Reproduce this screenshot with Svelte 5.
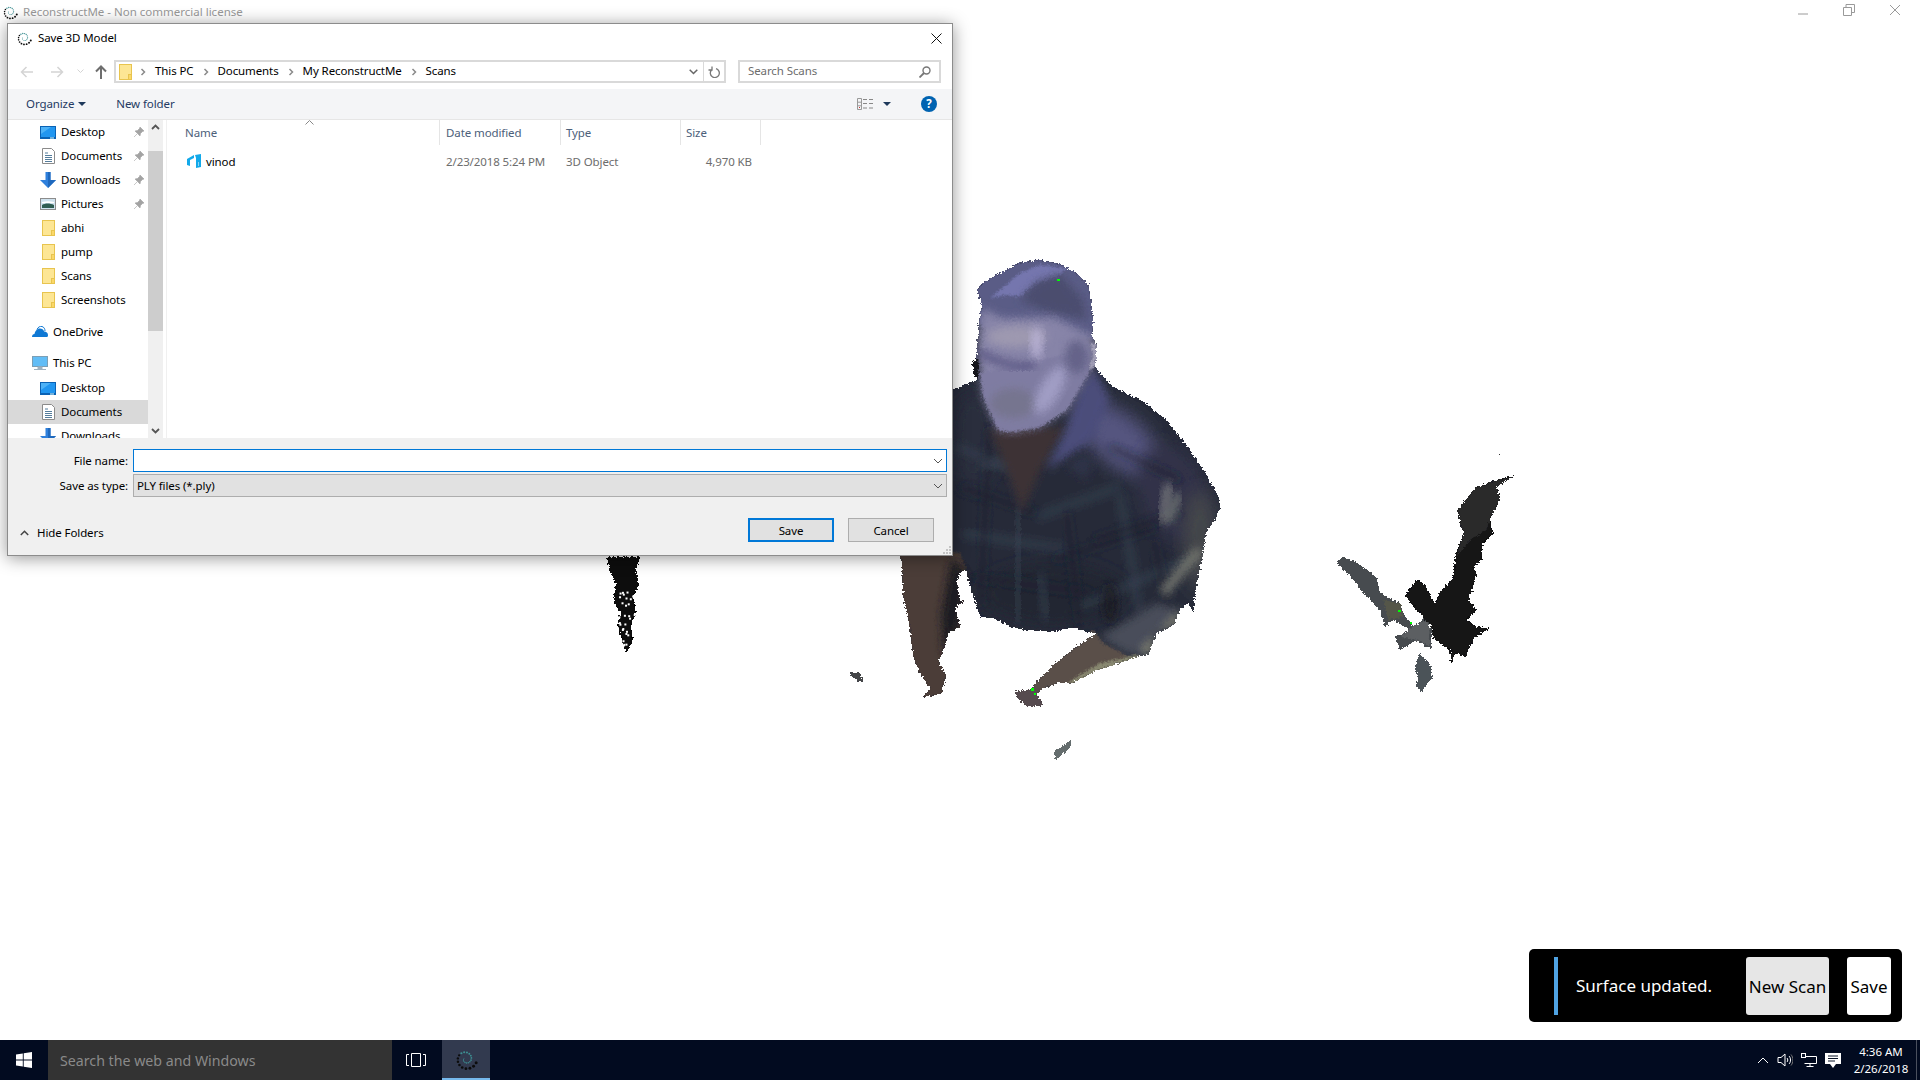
<script>
const quick = [
  { label: 'Desktop', icon: 'desktop', pin: true },
  { label: 'Documents', icon: 'docs', pin: true },
  { label: 'Downloads', icon: 'down', pin: true },
  { label: 'Pictures', icon: 'pics', pin: true },
  { label: 'abhi', icon: 'folder' },
  { label: 'pump', icon: 'folder' },
  { label: 'Scans', icon: 'folder' },
  { label: 'Screenshots', icon: 'folder' }
];

const pcItems = [
  { label: 'Desktop', icon: 'desktop', cls: 'first' },
  { label: 'Documents', icon: 'docs', cls: 'selected' },
  { label: 'Downloads', icon: 'down', cls: '' }
];

const crumbs = ['This PC', 'Documents', 'My ReconstructMe', 'Scans'];

// dotted spiral of the ReconstructMe logo, inner curl first
const logoDots = Array.from({ length: 24 }, (_, i) => {
  const t = i / 23;
  const a = ((200 - t * 540) * Math.PI) / 180;
  const r = 1.4 + t * 5.8;
  return {
    x: 8 + r * Math.cos(a),
    y: 8 + r * Math.sin(a),
    r: 0.32 + t * 0.68,
    c: t < 0.62 ? '#3d8f92' : '#0c0c0c'
  };
});

// man, in coordinates of a 3x crop whose origin is (880, 240)
const man = `292,150 300,135 340,110 420,68 480,60 540,72 590,100 625,135 632,180 640,240 636,290 650,310 648,360 640,375
660,400 700,440 790,485 860,540 930,630 970,690 1015,770 1022,800 1005,840 980,870 970,930 950,1030 940,1120 925,1085 900,1110
880,1155 830,1180 805,1245 770,1250 715,1270 650,1290 575,1330 530,1330 490,1345 470,1360 490,1395 440,1400 410,1370 405,1355
450,1350 490,1305 520,1275 590,1220 650,1180 620,1175 580,1160 520,1175 440,1170 390,1160 340,1135 300,1130 290,1100 265,1020
258,985 240,1000 230,1025 240,1080 250,1085 225,1100 240,1160 205,1180 190,1230 175,1265 198,1305 185,1360 150,1368 130,1370
150,1345 120,1300 100,1250 90,1160 70,1070 65,960 40,900 100,500 218,450 292,420 290,330 296,250 306,200`;

const plaid = [
  [230, 620, 420, 700], [240, 740, 470, 820], [250, 880, 560, 930], [280, 1010, 640, 1060],
  [470, 830, 720, 740], [520, 960, 830, 860], [600, 1100, 920, 960], [330, 560, 300, 1100],
  [420, 800, 410, 1150], [560, 820, 600, 1150], [720, 760, 780, 1120], [690, 620, 900, 720],
  [300, 680, 520, 640], [640, 900, 900, 820], [480, 1000, 500, 1140], [820, 900, 860, 1080]
];

// speckled chunk by the left edge of the scan, holes get denser downwards
const speck = Array.from({ length: 60 }, (_, i) => {
  const a = Math.sin(i * 12.9898) * 43758.5453;
  const b = Math.sin(i * 78.233) * 24634.6345;
  const v = b - Math.floor(b);
  return { x: 611 + (a - Math.floor(a)) * 26, y: 580 + Math.sqrt(v) * 75 };
});
</script>

{#snippet logo(size)}
  <svg width={size} height={size} viewBox="0 0 16 16" class="noshrink">
    {#each logoDots as d}
      <circle cx={d.x} cy={d.y} r={d.r} fill={d.c} />
    {/each}
  </svg>
{/snippet}

{#snippet folder()}
  <svg width="13" height="16" viewBox="0 0 13 16" class="noshrink">
    <rect x=".5" y=".5" width="12" height="15" fill="#fde694" stroke="#e8c44e" />
    <rect x="9.5" y="10.5" width="3" height="5" fill="#fbd868" stroke="#e8c44e" />
  </svg>
{/snippet}

{#snippet navIcon(kind)}
  <span class="nav-ico">
    {#if kind === 'folder'}
      <span class="folder-ico">{@render folder()}</span>
    {:else if kind === 'desktop'}
      <svg width="16" height="13" viewBox="0 0 16 13">
        <rect width="16" height="13" fill="#0a62b4" />
        <rect x="1" y="1" width="14" height="10" fill="#2196f0" />
        <path d="M1 1h10L1 8z" fill="#4db2f7" />
        <rect x="10" y="11.5" width="4" height="1" fill="#dff" />
      </svg>
    {:else if kind === 'docs'}
      <svg width="13" height="16" viewBox="0 0 13 16">
        <path d="M.5.5h9l3 3v12H.5z" fill="#fff" stroke="#8b8b8b" />
        <path d="M3 5h3M3 7.500h7M3 9.500h7M3 11.500h7M3 13.500h7" stroke="#557d9c" />
      </svg>
    {:else if kind === 'down'}
      <svg width="16" height="16" viewBox="0 0 16 16">
        <path d="M5.500 0h5v8H16l-8 8-8-8h5.500z" fill="#2f80dc" />
        <path d="M8 0h2.500v8H16l-8 8z" fill="#1f69bd" />
      </svg>
    {:else if kind === 'pics'}
      <svg width="16" height="12" viewBox="0 0 16 12">
        <rect x=".5" y=".5" width="15" height="11" fill="#cfe2ee" stroke="#8c8c8c" />
        <path d="M2 4c4-1 8-1 12 0v1H2z" fill="#fff" />
        <path d="M2 7c3-2 8-2 12 0v3H2z" fill="#2f5d52" />
      </svg>
    {/if}
  </span>
{/snippet}

{#snippet pin()}
  <svg width="10" height="10" viewBox="0 0 10 10" class="pin">
    <path d="M6 0l4 4-1.500.5-2 2L6 9 1 4l2.500-.5 2-2zM3 7L0 10" fill="#a3a3a3" stroke="#a3a3a3" stroke-width=".6" />
  </svg>
{/snippet}

{#snippet smallChevron()}
  <svg width="6" height="8" viewBox="0 0 6 8" class="crumb-sep"><path d="M1.500 1l3 3-3 3" fill="none" stroke="#8a8a8a" stroke-width="1.500" /></svg>
{/snippet}

{#snippet comboArrow()}
  <svg width="10" height="6" viewBox="0 0 10 6" class="combo-arrow"><path d="M1 1l4 4 4-4" fill="none" stroke="#555" /></svg>
{/snippet}

<div class="desktop">
  <!-- the scan is a free canvas, the points are its content -->
  <svg class="scan" width="1920" height="1080" viewBox="0 0 1920 1080">
    <defs>
      <filter id="rough" x="-5%" y="-5%" width="110%" height="110%">
        <feTurbulence type="fractalNoise" baseFrequency="0.45" numOctaves="2" seed="4" result="n" />
        <feDisplacementMap in="SourceGraphic" in2="n" scale="5" xChannelSelector="R" yChannelSelector="G" />
        <feComponentTransfer><feFuncA type="discrete" tableValues="0 1" /></feComponentTransfer>
      </filter>
      <filter id="soft" x="-30%" y="-30%" width="160%" height="160%"><feGaussianBlur stdDeviation="26" /></filter>
      <filter id="softer" x="-30%" y="-30%" width="160%" height="160%"><feGaussianBlur stdDeviation="12" /></filter>
      <filter id="edge" x="-10%" y="-10%" width="120%" height="120%"><feGaussianBlur stdDeviation="3" /></filter>
      <clipPath id="man-clip"><polygon points={man} /></clipPath>
    </defs>

    <g filter="url(#rough)">
      <g transform="translate(880 240) scale(.3333)">
        <g clip-path="url(#man-clip)">
          <rect x="0" y="0" width="1100" height="1450" fill="#272b39" />
          <!-- shoulders and back -->
          <ellipse cx="720" cy="600" rx="150" ry="76" transform="rotate(40 720 600)" fill="#54557f" filter="url(#soft)" />
          <ellipse cx="880" cy="760" rx="100" ry="150" transform="rotate(-20 880 760)" fill="#32334a" filter="url(#soft)" />
          <ellipse cx="960" cy="900" rx="50" ry="150" fill="#44474c" filter="url(#soft)" />
          <ellipse cx="280" cy="600" rx="70" ry="150" fill="#2a2f3d" filter="url(#soft)" />
          <ellipse cx="520" cy="1060" rx="220" ry="90" fill="#232733" filter="url(#soft)" />
          {#each plaid as p, i}
            <line x1={p[0]} y1={p[1]} x2={p[2]} y2={p[3]} stroke={i % 2 ? '#1e2230' : '#3b4858'} stroke-width="16" stroke-opacity=".7" filter="url(#softer)" />
          {/each}
          <!-- neck and collar -->
          <polygon points="330,570 560,560 480,690 425,820 385,700" fill="#3c3236" filter="url(#softer)" />
          <polygon points="645,385 690,480 640,600 500,690 560,560 600,440" fill="#4c4e7a" filter="url(#softer)" />
          <polygon points="600,640 560,680 620,720 640,660" fill="#2f3046" filter="url(#softer)" />
          <!-- sleeve highlight -->
          <path d="M870 730c-20 40-10 80-25 120" stroke="#9fa199" stroke-width="18" stroke-opacity=".8" fill="none" filter="url(#softer)" />
          <path d="M895 760c-10 30-20 60-30 85" stroke="#6e7473" stroke-width="24" fill="none" filter="url(#softer)" />
          <path d="M960 930c-40 40-80 90-110 130" stroke="#74776f" stroke-width="28" fill="none" filter="url(#softer)" />
          <polygon points="660,1190 830,1090 900,1110 880,1160 830,1180 805,1245 740,1240" fill="#4a4e5a" filter="url(#softer)" />
          <polygon points="850,1160 900,1110 890,1150 830,1180 805,1245 780,1230" fill="#8d8d78" filter="url(#softer)" />
          <ellipse cx="690" cy="1090" rx="22" ry="60" fill="#191a22" fill-opacity=".8" filter="url(#softer)" />
          <!-- forearm and hand -->
          <polygon points="400,1345 520,1270 640,1170 670,1210 750,1250 575,1340 490,1350 480,1410 400,1410" fill="#5a4f4a" filter="url(#edge)" />
          <polygon points="575,1320 660,1270 770,1245 800,1260 650,1300 560,1340" fill="#88886f" filter="url(#edge)" />
          <polygon points="400,1350 470,1345 500,1410 420,1410" fill="#564c50" filter="url(#edge)" />
          <!-- left arm -->
          <polygon points="30,920 240,940 262,1000 270,1140 180,1380 120,1380 60,1100" fill="#4b3e37" filter="url(#edge)" />
          <polygon points="215,950 262,1000 240,1160 190,1250 185,1120" fill="#1f1c20" filter="url(#softer)" />
          <!-- head, hair runs softly into the forehead -->
          <polygon points="280,130 420,50 560,60 650,140 650,300 300,260" fill="#5a5b86" filter="url(#edge)" />
          <polygon points="330,175 420,100 480,75 560,85 530,115 470,130 420,170 375,165" fill="#7476ae" filter="url(#edge)" />
          <polygon points="420,180 470,125 540,100 610,180 620,240 500,215" fill="#4c4d6e" filter="url(#softer)" />
          <polygon points="305,205 370,235 520,230 600,270 640,290 650,355 628,395 560,510 480,560 400,575 355,570 310,470 290,330" fill="#8784a8" filter="url(#softer)" />
          <!-- jaw keeps a hard edge -->
          <polygon points="300,400 620,330 628,395 560,510 480,560 400,575 355,570 310,470" fill="#7f7ca2" filter="url(#edge)" />
          <ellipse cx="410" cy="290" rx="90" ry="32" fill="#9e99b0" filter="url(#softer)" />
          <ellipse cx="470" cy="310" rx="16" ry="50" fill="#b8b1d4" filter="url(#softer)" />
          <path d="M295 335c50 30 110 50 170 40" stroke="#565380" stroke-width="20" fill="none" filter="url(#softer)" />
          <ellipse cx="400" cy="490" rx="70" ry="45" fill="#76748f" filter="url(#softer)" />
          <ellipse cx="510" cy="450" rx="30" ry="80" transform="rotate(30 510 450)" fill="#a09dc4" filter="url(#softer)" />
          <ellipse cx="590" cy="350" rx="34" ry="50" fill="#656389" filter="url(#softer)" />
          <path d="M640 310l6 46-16 30" stroke="#a8a5bc" stroke-width="12" fill="none" filter="url(#edge)" />
        </g>
        <polygon points="275,365 295,355 296,420 284,410" fill="#17171b" />
      </g>
    </g>

    <!-- wall pieces on the right -->
    <g filter="url(#rough)">
      <g transform="translate(1300 430) scale(.3333)">
        <polygon points="108,398 130,380 165,395 230,440 240,490 300,520 310,550 340,590 375,565 395,600 392,660 350,630 300,660 285,620 330,600 280,570 255,590 240,540 190,490 160,450" fill="#474c50" />
        <polygon points="250,510 300,520 310,560 265,570" fill="#55564a" />
        <polygon points="300,620 345,585 385,570 392,650 350,630" fill="#5c5e62" />
        <polygon points="358,672 395,710 398,740 365,785 347,770 355,745 345,710" fill="#4c5258" />
        <polygon points="650,135 590,150 525,175 490,220 472,240 480,270 490,310 465,380 460,440 420,490 405,520 375,465 350,448 315,495 350,540 395,590 400,625 420,640 450,660 455,705 465,670 495,680 525,620 570,595 530,590 500,570 530,540 505,510 520,470 530,430 520,410 545,390 550,340 580,310 570,265 600,210 590,170 610,150" fill="#121213" />
        <polygon points="640,140 590,150 525,175 490,220 472,240 480,270 490,310 470,380 510,330 560,300 570,265 600,210 590,170" fill="#2a2a2c" />
      </g>
    </g>

    <g filter="url(#rough)">
      <polygon points="607,557 640,557 636,570 639,585 633,598 636,612 631,625 633,640 628,650 626,652 622,640 618,628 620,612 613,600 616,585 610,572" fill="#0a0a0a" />
      <polygon points="848,672 860,673 864,683 856,680" fill="#45464a" />
      <polygon points="1053,752 1062,746 1071,740 1071,747 1062,755 1056,760" fill="#656d6e" />
      <polygon points="1497,453 1500,455 1499,457" fill="#333" />
    </g>
    {#each speck as s}
      <rect x={s.x} y={s.y} width="2" height="2" fill="#fff" />
    {/each}
    <rect x="1057" y="279" width="3" height="2" fill="#0f0" />
    <rect x="1031" y="688" width="3" height="3" fill="#0f0" />
    <rect x="1034" y="693" width="2" height="2" fill="#0f0" />
    <rect x="1398" y="610" width="3" height="2" fill="#0f0" />
    <rect x="1410" y="622" width="2" height="2" fill="#0f0" />
  </svg>

  <header class="appbar">
    {@render logo(16)}
    <span class="app-title">ReconstructMe - Non commercial license</span>
    <div class="win-controls">
      <svg width="12" height="12" viewBox="0 0 12 12"><path d="M1 10h10" stroke="#9a9a9a" /></svg>
      <svg width="12" height="12" viewBox="0 0 12 12"><path d="M.5 3.500h8v8h-8zM3 3.500V.500h8.500v8H8.500" fill="none" stroke="#9a9a9a" /></svg>
      <svg width="12" height="12" viewBox="0 0 12 12"><path d="M1 1l10 10M11 1L1 11" stroke="#9a9a9a" /></svg>
    </div>
  </header>

  <div class="spacer"></div>

  <footer class="taskbar">
    <div class="start">
      <svg width="16" height="16" viewBox="0 0 16 16"><path d="M0 2.500l6.800-1v6H0zM7.700 1.300L16 0v7.500H7.700zM0 8.500h6.800v6l-6.800-1zM7.700 8.500H16V16l-8.300-1.300z" fill="#fff" /></svg>
    </div>
    <div class="task-search">Search the web and Windows</div>
    <div class="task-view">
      <svg width="20" height="14" viewBox="0 0 20 14"><path d="M5.500.5h9v13h-9zM3 1.500H.5v11H3M17 1.500h2.500v11H17" fill="none" stroke="#fff" /></svg>
    </div>
    <div class="task-app">{@render logo(24)}</div>
    <div class="tray">
      <svg width="12" height="8" viewBox="0 0 12 8"><path d="M1 7l5-5 5 5" fill="none" stroke="#fff" /></svg>
      <svg width="16" height="16" viewBox="0 0 16 16"><path d="M1 5.500h3l4-3.500v12l-4-3.500H1zM10 6c1 1 1 3 0 4M12 4c2 2 2 6 0 8" fill="none" stroke="#fff" /><path d="M14 2.500c2.500 3 2.500 8 0 11" fill="none" stroke="#777" /></svg>
      <svg width="16" height="14" viewBox="0 0 16 14"><path d="M3.500 3.500H15.500v7H3.500M9 10.500v3M5.500 13.500h7" fill="none" stroke="#fff" /><rect x=".5" y=".5" width="4" height="4" fill="#0a1428" stroke="#fff" /></svg>
      <svg width="16" height="15" viewBox="0 0 16 15"><path d="M0 0h16v11h-5l-3 4-3-4H0z" fill="#fff" /><path d="M3 3h10M3 5.500h10M3 8h7" stroke="#0a1428" /></svg>
      <div class="clock"><span>4:36 AM</span><span>2/26/2018</span></div>
      <div class="show-desktop"></div>
    </div>
  </footer>

  <section class="dialog">
    <div class="dlg-title">
      {@render logo(16)}
      <span>Save 3D Model</span>
      <svg class="dlg-close" width="11" height="11" viewBox="0 0 11 11"><path d="M.5.5l10 10M10.500.5l-10 10" stroke="#111" /></svg>
    </div>

    <div class="dlg-nav">
      <span class="nav-btn back"><svg width="14" height="12" viewBox="0 0 14 12"><path d="M13 6H2M6.500 1L1.500 6l5 5" fill="none" stroke="#d4d4d4" stroke-width="1.500" /></svg></span>
      <span class="nav-btn back"><svg width="14" height="12" viewBox="0 0 14 12"><path d="M1 6h11M7.500 1l5 5-5 5" fill="none" stroke="#d4d4d4" stroke-width="1.500" /></svg></span>
      <span class="nav-btn small"><svg width="7" height="5" viewBox="0 0 7 5"><path d="M.5.500l3 3 3-3" fill="none" stroke="#d4d4d4" /></svg></span>
      <span class="nav-btn up"><svg width="12" height="14" viewBox="0 0 12 14"><path d="M6 14V2M1 6.500l5-5 5 5" fill="none" stroke="#6e6e6e" stroke-width="2" /></svg></span>
      <div class="addr">
        <span class="addr-folder">{@render folder()}</span>
        {@render smallChevron()}
        {#each crumbs as c, i}
          <span class="crumb">{c}</span>
          {#if i < crumbs.length - 1}{@render smallChevron()}{/if}
        {/each}
        <span class="addr-end">
          <svg width="9" height="6" viewBox="0 0 9 6"><path d="M.7.700l3.800 3.800L8.300.7" fill="none" stroke="#666" stroke-width="1.500" /></svg>
        </span>
        <span class="addr-refresh">
          <svg width="12" height="13" viewBox="0 0 12 13"><path d="M7.500 3.200A4.500 4.500 0 1 1 3 4.500M3.500 1v3.500H0" transform="translate(.5 .5)" fill="none" stroke="#777" stroke-width="1.300" /></svg>
        </span>
      </div>
      <div class="search">
        <span>Search Scans</span>
        <svg width="12" height="12" viewBox="0 0 12 12"><circle cx="7.500" cy="4.500" r="3.500" fill="none" stroke="#777" stroke-width="1.400" /><path d="M5 7l-4.500 4.500" stroke="#777" stroke-width="1.800" /></svg>
      </div>
    </div>

    <div class="toolbar">
      <span class="tool">Organize</span>
      <svg class="caret" width="8" height="4" viewBox="0 0 8 4"><path d="M0 0h8L4 4z" fill="#1e395b" /></svg>
      <span class="tool newfolder">New folder</span>
      <svg class="view-ico" width="17" height="12" viewBox="0 0 17 12">
        <path d="M.5.500h4v11h-4zM.5 4.200h4M.5 7.800h4" fill="none" stroke="#999" />
        <rect x="2" y="9" width="1" height="1" fill="#c33" />
        <path d="M6 1.500h4M12 1.500h4M6 5.500h4M12 5.500h4M6 10h4M12 10h4" stroke="#888" />
      </svg>
      <svg class="view-caret" width="8" height="4" viewBox="0 0 8 4"><path d="M0 0h8L4 4z" fill="#1e395b" /></svg>
      <span class="help">?</span>
    </div>

    <div class="browse">
      <nav class="tree">
        {#each quick as item}
          <div class="tree-row">
            {@render navIcon(item.icon)}
            <span class="tree-label">{item.label}</span>
            {#if item.pin}{@render pin()}{/if}
          </div>
        {/each}
        <div class="tree-row top onedrive">
          <svg class="root-ico" width="16" height="12" viewBox="0 0 16 12"><path d="M0 11c0-2 1-3 2.500-3C3 5 5 2.500 8 2.500c2 0 3.500 1 4.200 3 2 0 3.800 1.500 3.800 3.500 0 1-.3 2-1 2z" fill="#0f78d4" /><path d="M5 3.500C6 1 8 0 10 .5 12 1 13 3 13 5" fill="none" stroke="#0f78d4" /></svg>
          <span class="tree-label">OneDrive</span>
        </div>
        <div class="tree-row top pc">
          <svg class="root-ico" width="16" height="15" viewBox="0 0 16 15"><rect x=".5" y=".5" width="15" height="10" fill="#62bdf6" stroke="#7c9fb5" /><path d="M6 11h4v2H6zM2 13.500h12" fill="#9fb2c0" stroke="#9fb2c0" /></svg>
          <span class="tree-label">This PC</span>
        </div>
        {#each pcItems as item}
          <div class="tree-row {item.cls}">
            {@render navIcon(item.icon)}
            <span class="tree-label">{item.label}</span>
          </div>
        {/each}
      </nav>

      <div class="scrollbar">
        <svg class="scroll-btn" width="15" height="15" viewBox="0 0 15 15"><path d="M4 9l3.500-3.500L11 9" fill="none" stroke="#555" stroke-width="1.800" /></svg>
        <div class="scroll-thumb"></div>
        <svg class="scroll-btn end" width="15" height="15" viewBox="0 0 15 15"><path d="M4 6l3.500 3.500L11 6" fill="none" stroke="#555" stroke-width="1.800" /></svg>
      </div>

      <div class="files">
        <svg class="sort" width="9" height="5" viewBox="0 0 9 5"><path d="M.5 4.500l4-4 4 4" fill="none" stroke="#888" /></svg>
        <div class="file-grid head">
          <span class="name-cell">Name</span>
          <span>Date modified</span>
          <span class="tight">Type</span>
          <span class="tight">Size</span>
        </div>
        <div class="file-grid row">
          <span class="name-cell file-name">
            <svg width="14" height="14" viewBox="0 0 14 14"><path d="M0 5l7-4v3L3 6v6L0 11z" fill="#12a9ea" /><path d="M8 1l6-1v13l-5 1V4z" fill="#12a9ea" /><path d="M11 9h1M11 11h1" stroke="#fff" /></svg>
            vinod
          </span>
          <span>2/23/2018 5:24 PM</span>
          <span class="tight">3D Object</span>
          <span class="size">4,970 KB</span>
        </div>
      </div>
    </div>

    <div class="save-panel">
      <div class="fields">
        <label for="fname">File name:</label>
        <div class="combo active"><input id="fname" />{@render comboArrow()}</div>
        <span class="lab">Save as type:</span>
        <div class="combo">PLY files (*.ply){@render comboArrow()}</div>
      </div>
      <div class="panel-foot">
        <span class="hide-folders">
          <svg width="9" height="6" viewBox="0 0 9 6"><path d="M.8 5l3.700-3.700L8.200 5" fill="none" stroke="#444" stroke-width="1.500" /></svg>
          Hide Folders
        </span>
        <button class="dlg-btn default">Save</button>
        <button class="dlg-btn">Cancel</button>
      </div>
      <svg class="grip" width="10" height="10" viewBox="0 0 10 10"><path d="M7 1h2v2H7zM4 4h2v2H4zM7 4h2v2H7zM1 7h2v2H1zM4 7h2v2H4zM7 7h2v2H7z" fill="#c4c4c4" /></svg>
    </div>
  </section>

  <aside class="toast">
    <span class="toast-bar"></span>
    <span class="toast-text">Surface updated.</span>
    <button class="toast-btn scan-btn">New Scan</button>
    <button class="toast-btn save-btn">Save</button>
  </aside>
</div>

<style>
:global(body) {
  margin: 0;
  background: #fff;
}

.desktop {
  position: relative;
  width: 1920px;
  height: 1080px;
  overflow: hidden;
  display: flex;
  flex-direction: column;
  background: #fff;
  font-family: "Noto Sans", "Open Sans", sans-serif;
  font-size: 11.5px;
  color: #000;
}

.scan {
  position: absolute;
  left: 0;
  top: 0;
}

.noshrink {
  flex-shrink: 0;
}

.appbar {
  position: relative;
  height: 24px;
  display: flex;
  align-items: center;
  padding-left: 2px;
  gap: 5px;
  color: #999;
}

.app-title {
  padding-bottom: 2px;
}

.win-controls {
  margin-left: auto;
  display: flex;
  gap: 34px;
  padding-right: 19px;
  margin-top: -4px;
}

.spacer {
  flex: 1;
}

/* taskbar */
.taskbar {
  position: relative;
  height: 40px;
  display: flex;
  background: #020b20;
  color: #fff;
}

.start {
  width: 48px;
  display: flex;
  align-items: center;
  justify-content: center;
}

.task-search {
  width: 332px;
  padding-left: 12px;
  background: #333;
  color: #8a8a8a;
  font-size: 14.2px;
  line-height: 41px;
}

.task-view {
  width: 48px;
  padding-right: 2px;
  display: flex;
  align-items: center;
  justify-content: center;
}

.task-app {
  width: 48px;
  box-sizing: border-box;
  border-bottom: 2px solid #76b9ed;
  background: #323a4f;
  display: flex;
  align-items: center;
  justify-content: center;
}

.tray {
  margin-left: auto;
  display: flex;
  align-items: center;
  gap: 8px;
}

.clock {
  width: 62px;
  margin-left: 1px;
  display: flex;
  flex-direction: column;
  align-items: center;
  line-height: 17px;
}

.show-desktop {
  width: 1px;
  height: 40px;
  margin-left: -4px;
  margin-right: 3px;
  background: #4a505e;
}

/* dialog */
.dialog {
  position: absolute;
  left: 7px;
  top: 23px;
  width: 946px;
  height: 533px;
  box-sizing: border-box;
  border: 1px solid #8c8c8c;
  background: #fff;
  box-shadow: 0 2px 16px rgba(0, 0, 0, 0.42);
  display: flex;
  flex-direction: column;
  letter-spacing: -0.1px;
}

.dlg-title {
  height: 28px;
  display: flex;
  align-items: center;
  gap: 6px;
  padding-left: 8px;
}

.dlg-title span {
  padding-bottom: 1px;
}

.dlg-close {
  margin-left: auto;
  margin-right: 10px;
}

.dlg-nav {
  height: 37px;
  box-sizing: border-box;
  padding: 8px 0 0 4px;
  display: flex;
}

.nav-btn {
  height: 23px;
  width: 30px;
  display: flex;
  align-items: center;
  justify-content: center;
}

.nav-btn.small {
  width: 16px;
}

.nav-btn.up {
  width: 26px;
}

.addr {
  width: 612px;
  height: 23px;
  box-sizing: border-box;
  border: 2px solid #d9d9d9;
  display: flex;
  align-items: center;
  padding-left: 3px;
}

.addr-folder {
  display: flex;
  margin-right: 5px;
}

.crumb-sep {
  margin: 0 9px 0 3px;
}

.crumb {
  margin-right: 6px;
  padding-bottom: 2px;
  white-space: nowrap;
}

.addr-end {
  margin-left: auto;
  width: 20px;
  height: 19px;
  display: flex;
  align-items: center;
  justify-content: center;
}

.addr-refresh {
  width: 20px;
  height: 19px;
  border-left: 1px solid #d9d9d9;
  display: flex;
  align-items: center;
  justify-content: center;
}

.search {
  width: 203px;
  height: 23px;
  box-sizing: border-box;
  margin-left: 12px;
  border: 2px solid #d9d9d9;
  padding: 0 8px;
  display: flex;
  align-items: center;
  justify-content: space-between;
  color: #6d6d6d;
}

.search span {
  padding-bottom: 2px;
}

.toolbar {
  height: 30px;
  display: flex;
  align-items: center;
  background: #f4f5f7;
  border-bottom: 1px solid #e6e6e6;
  padding-left: 18px;
  color: #243a63;
}

.tool {
  padding-bottom: 1px;
}

.caret {
  margin-left: 4px;
}

.newfolder {
  margin-left: 30px;
}

.view-ico {
  margin-left: auto;
}

.view-caret {
  margin-left: 9px;
}

.help {
  width: 16px;
  height: 16px;
  margin: 0 15px 0 30px;
  border-radius: 50%;
  background: #0063b1;
  color: #fff;
  font-weight: 700;
  text-align: center;
  line-height: 16px;
}

.browse {
  flex: 1;
  min-height: 0;
  display: flex;
}

.tree {
  width: 140px;
  overflow: hidden;
}

.tree-row {
  height: 24px;
  display: flex;
  align-items: center;
  gap: 5px;
  padding-left: 32px;
  position: relative;
}

.tree-label {
  padding-bottom: 1px;
}

.tree-row.top {
  padding-left: 24px;
}

.tree-row.onedrive {
  margin-top: 8px;
}

.tree-row.pc {
  margin-top: 7px;
}

.tree-row.first {
  margin-top: 1px;
}

.tree-row.selected {
  background: #d9d9d9;
}

.nav-ico {
  width: 16px;
  height: 16px;
  display: flex;
  align-items: center;
  justify-content: center;
}

.folder-ico {
  display: flex;
}

.pin {
  position: absolute;
  right: 4px;
  top: 7px;
}

.scrollbar {
  width: 15px;
  background: #f0f0f0;
  display: flex;
  flex-direction: column;
}

.scroll-thumb {
  height: 180px;
  margin-top: 16px;
  background: #cdcdcd;
}

.scroll-btn.end {
  margin-top: auto;
  margin-bottom: 0;
}

.files {
  flex: 1;
  position: relative;
  margin-left: 3px;
  border-left: 1px solid #f0f0f0;
}

.sort {
  position: absolute;
  left: 138px;
  top: 0;
}

.file-grid {
  display: grid;
  grid-template-columns: 273px 121px 120px 80px;
}

.file-grid.head {
  height: 25px;
  color: #4c607a;
}

.file-grid.head span {
  border-right: 1px solid #e5e5e5;
  line-height: 25px;
  padding-left: 6px;
}

.file-grid.head .name-cell {
  padding-left: 18px;
}

.file-grid.head .tight {
  padding-left: 5px;
}

.file-grid.row {
  height: 24px;
  margin-top: 4px;
  align-items: center;
  color: #6d6d6d;
}

.file-grid.row span {
  padding-left: 6px;
}

.file-grid.row .tight {
  padding-left: 5px;
}

.file-grid.row .file-name {
  padding-left: 20px;
  display: flex;
  align-items: center;
  gap: 5px;
  color: #000;
}

.file-grid.row .size {
  text-align: right;
  padding-right: 9px;
}

.save-panel {
  position: relative;
  height: 117px;
  box-sizing: border-box;
  background: #f0f0f0;
  padding-top: 11px;
}

.fields {
  display: grid;
  grid-template-columns: 120px 814px;
  grid-auto-rows: 23px;
  gap: 2px 5px;
  align-items: center;
}

.fields label,
.lab {
  text-align: right;
}

.combo {
  height: 23px;
  box-sizing: border-box;
  border: 1px solid #adadad;
  background: #e1e1e1;
  padding-left: 3px;
  display: flex;
  align-items: center;
  justify-content: space-between;
}

.combo.active {
  border-color: #0078d7;
  background: #fff;
}

.combo input {
  flex: 1;
  min-width: 0;
  border: 0;
  outline: 0;
  padding: 0;
  background: transparent;
}

.combo-arrow {
  margin-right: 3px;
}

.panel-foot {
  margin-top: 21px;
  padding-right: 18px;
  display: flex;
  gap: 14px;
}

.hide-folders {
  margin-right: auto;
  padding: 5px 0 0 12px;
  display: flex;
  align-items: center;
  gap: 8px;
}

.dlg-btn {
  width: 86px;
  height: 24px;
  box-sizing: border-box;
  border: 1px solid #adadad;
  padding: 0;
  background: #e1e1e1;
  font: inherit;
  letter-spacing: inherit;
  color: #000;
}

.dlg-btn.default {
  border: 2px solid #0078d7;
}

.grip {
  position: absolute;
  right: 0;
  bottom: 0;
}

/* toast over the scan */
.toast {
  position: absolute;
  left: 1529px;
  top: 949px;
  width: 373px;
  height: 73px;
  box-sizing: border-box;
  padding: 8px 11px 7px 25px;
  display: flex;
  border-radius: 5px;
  background: #000;
  color: #fff;
  font-size: 17px;
}

.toast-bar {
  width: 4px;
  background: #4fa3e3;
}

.toast-text {
  margin-left: 18px;
  line-height: 58px;
}

.toast-btn {
  padding: 0;
  border: 0;
  border-radius: 3px;
  font: inherit;
  color: #000;
}

.scan-btn {
  width: 83px;
  margin-left: auto;
  background: #e6e6e6;
}

.save-btn {
  width: 44px;
  margin-left: 18px;
  background: #fff;
}
</style>
